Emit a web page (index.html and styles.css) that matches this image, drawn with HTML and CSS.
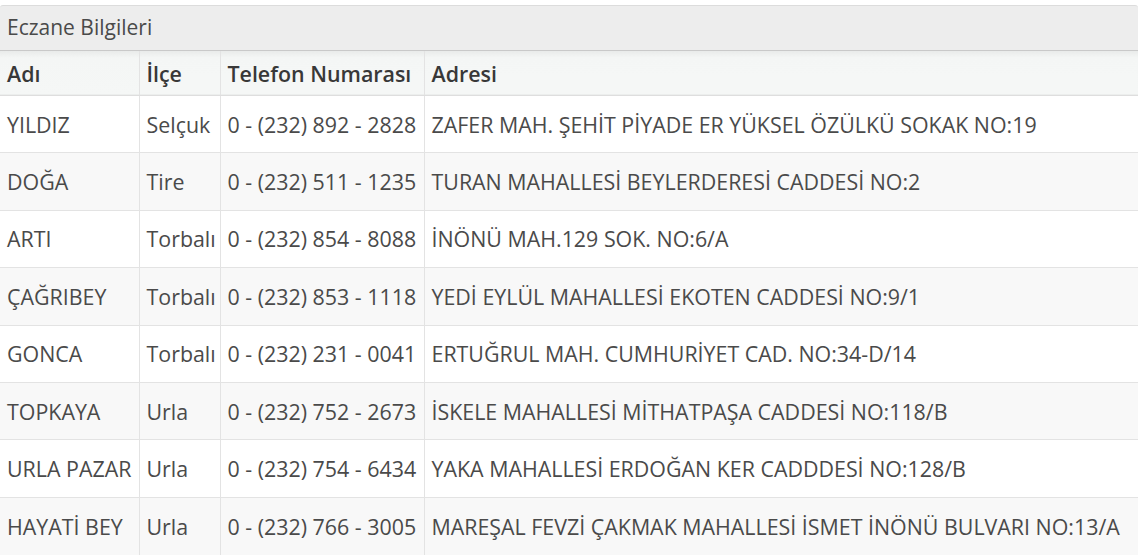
FILE: index.html
```html
<!DOCTYPE html>
<html lang="tr">
<head>
<meta charset="utf-8">
<title>Eczane Bilgileri</title>
<link rel="stylesheet" href="styles.css">
</head>
<body>
<div class="panel">
  <div class="panel-title">Eczane Bilgileri</div>
  <table class="grid">
    <colgroup>
      <col class="c-name"><col class="c-dist"><col class="c-tel"><col class="c-addr">
    </colgroup>
    <thead>
      <tr><th>Adı</th><th>İlçe</th><th>Telefon Numarası</th><th>Adresi</th></tr>
    </thead>
    <tbody>
      <tr><td>YILDIZ</td><td>Selçuk</td><td>0 - (232) 892 - 2828</td><td>ZAFER MAH. ŞEHİT PİYADE ER YÜKSEL ÖZÜLKÜ SOKAK NO:19</td></tr>
      <tr><td>DOĞA</td><td>Tire</td><td>0 - (232) 511 - 1235</td><td>TURAN MAHALLESİ BEYLERDERESİ CADDESİ NO:2</td></tr>
      <tr><td>ARTI</td><td>Torbalı</td><td>0 - (232) 854 - 8088</td><td>İNÖNÜ MAH.129 SOK. NO:6/A</td></tr>
      <tr><td>ÇAĞRIBEY</td><td>Torbalı</td><td>0 - (232) 853 - 1118</td><td>YEDİ EYLÜL MAHALLESİ EKOTEN CADDESİ NO:9/1</td></tr>
      <tr><td>GONCA</td><td>Torbalı</td><td>0 - (232) 231 - 0041</td><td>ERTUĞRUL MAH. CUMHURİYET CAD. NO:34-D/14</td></tr>
      <tr><td>TOPKAYA</td><td>Urla</td><td>0 - (232) 752 - 2673</td><td>İSKELE MAHALLESİ MİTHATPAŞA CADDESİ NO:118/B</td></tr>
      <tr><td>URLA PAZAR</td><td>Urla</td><td>0 - (232) 754 - 6434</td><td>YAKA MAHALLESİ ERDOĞAN KER CADDDESİ NO:128/B</td></tr>
      <tr><td>HAYATİ BEY</td><td>Urla</td><td>0 - (232) 766 - 3005</td><td>MAREŞAL FEVZİ ÇAKMAK MAHALLESİ İSMET İNÖNÜ BULVARI NO:13/A</td></tr>
    </tbody>
  </table>
</div>
</body>
</html>
```

FILE: styles.css
```css
html, body {
  margin: 0;
  padding: 0;
  background: #fff;
}
body {
  font-family: "Open Sans", "Liberation Sans", sans-serif;
  font-size: 21.4px;
  color: #4a4a4a;
  padding-top: 5px;
}
.panel {
  width: 1138px;
}
.panel-title {
  box-sizing: border-box;
  height: 46px;
  line-height: 42px;
  padding: 0 7px;
  font-size: 21px;
  background: #ededed;
  border-top: 1px solid #dcdcdc;
  border-bottom: 1px solid #c9c9c9;
  border-radius: 3px 3px 0 0;
  color: #4a4a4a;
}
.grid {
  width: 100%;
  border-collapse: collapse;
  table-layout: fixed;
}
.c-name { width: 139px; }
.c-dist { width: 81px; }
.c-tel { width: 204px; }
.grid th {
  height: 44px;
  padding: 0 7px;
  text-align: left;
  font-weight: 600;
  color: #383838;
  background: linear-gradient(#e9ebea 0, #f4f6f5 7px, #f5f7f6 100%);
  box-shadow: inset 0 -7px 0 -6px #eceeed;
  border-left: 1px solid #e3e3e3;
  border-bottom: 1px solid #dedede;
  white-space: nowrap;
}
.grid td {
  height: 57.4px;
  padding: 0 7px;
  border-left: 1px solid #e3e3e3;
  border-bottom: 1px solid #e3e3e3;
  white-space: nowrap;
  box-sizing: border-box;
}
.grid th:first-child, .grid td:first-child {
  border-left: none;
}
.grid tbody tr:nth-child(odd) td {
  background: #fff;
}
.grid tbody tr:nth-child(even) td {
  background: #f8f8f8;
}
.grid tbody tr:last-child td {
  border-bottom: none;
}
```
